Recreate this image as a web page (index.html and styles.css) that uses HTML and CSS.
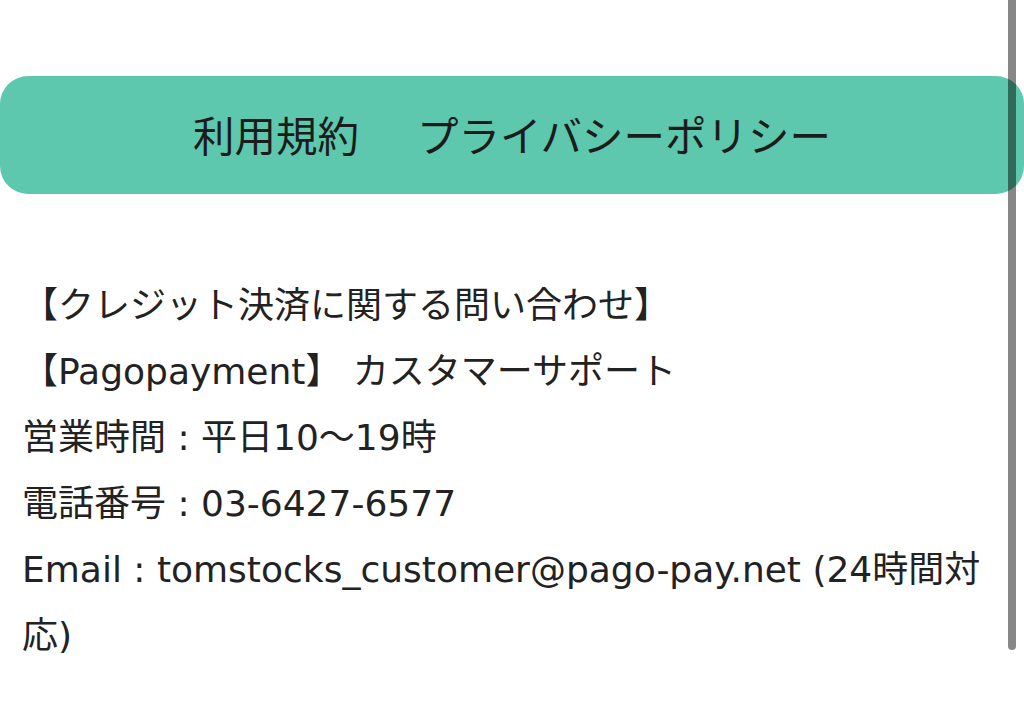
FILE: index.html
```html
<!DOCTYPE html>
<html lang="ja">
<head>
<meta charset="utf-8">
<title>お問い合わせ</title>
<link rel="stylesheet" href="styles.css">
</head>
<body>
<div class="page">
  <nav class="footer-nav">
    <a class="nav-link" href="#">利用規約</a>
    <a class="nav-link" href="#">プライバシーポリシー</a>
  </nav>
  <section class="contact">
    <p class="line">【クレジット決済に関する問い合わせ】</p>
    <p class="line">【Pagopayment】 カスタマーサポート</p>
    <p class="line">営業時間 : 平日10〜19時</p>
    <p class="line">電話番号 : 03-6427-6577</p>
    <p class="line">Email : tomstocks_customer@pago-pay.net (24時間対応)</p>
  </section>
</div>
<div class="scrollbar"></div>
</body>
</html>
```

FILE: styles.css
```css
html, body {
  margin: 0;
  padding: 0;
  background: #ffffff;
  overflow: hidden;
}

body {
  font-family: "DejaVu Sans", "Noto Sans CJK JP", sans-serif;
  color: #222222;
}

.page {
  padding-top: 76px;
}

.footer-nav {
  height: 118px;
  background: #5dc8ad;
  border-radius: 28px;
  display: flex;
  justify-content: center;
  align-items: center;
  gap: 58px;
}

.nav-link {
  color: #1c1c1c;
  text-decoration: none;
  font-family: "Noto Sans CJK JP", sans-serif;
  font-size: 41.5px;
  line-height: 1;
}

.contact {
  padding: 79px 22px 0 22px;
}

.line {
  margin: 0;
  font-size: 36px;
  line-height: 66px;
}

.scrollbar {
  position: fixed;
  top: -20px;
  right: 8px;
  width: 8px;
  height: 670px;
  border-radius: 4px;
  background: rgba(0, 0, 0, 0.47);
}
```
